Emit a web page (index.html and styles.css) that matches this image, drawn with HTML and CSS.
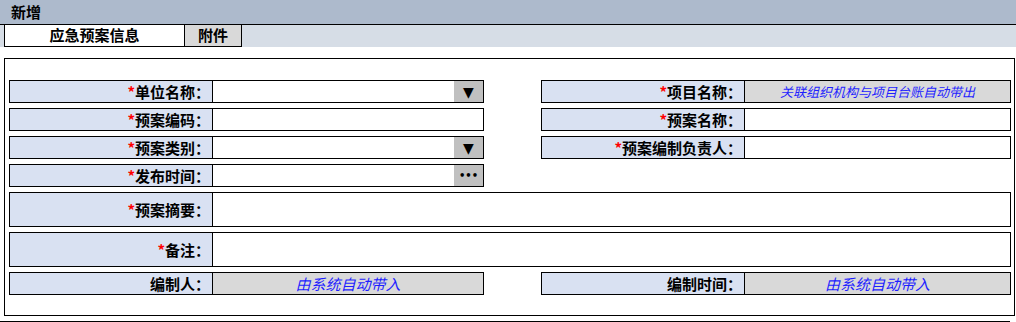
FILE: index.html
```html
<!DOCTYPE html>
<html lang="zh">
<head>
<meta charset="utf-8">
<link rel="stylesheet" href="styles.css">
</head>
<body>
<div class="page">
  <div class="title">新增</div>
  <div class="tabs">
    <div class="tab active">应急预案信息</div>
    <div class="tab">附件</div>
  </div>
  <div class="panel">
    <div class="form">
      <div class="field">
        <div class="label"><span class="req">*</span>单位名称：</div>
        <div class="input"><span class="btn">▼</span></div>
      </div>
      <div class="field">
        <div class="label"><span class="req">*</span>项目名称：</div>
        <div class="input auto small">关联组织机构与项目台账自动带出</div>
      </div>
      <div class="field">
        <div class="label"><span class="req">*</span>预案编码：</div>
        <div class="input"></div>
      </div>
      <div class="field">
        <div class="label"><span class="req">*</span>预案名称：</div>
        <div class="input"></div>
      </div>
      <div class="field">
        <div class="label"><span class="req">*</span>预案类别：</div>
        <div class="input"><span class="btn">▼</span></div>
      </div>
      <div class="field">
        <div class="label"><span class="req">*</span>预案编制负责人：</div>
        <div class="input"></div>
      </div>
      <div class="field">
        <div class="label"><span class="req">*</span>发布时间：</div>
        <div class="input"><span class="btn dots">•••</span></div>
      </div>
      <div class="field empty"></div>
      <div class="field wide tall">
        <div class="label"><span class="req">*</span>预案摘要：</div>
        <div class="input"></div>
      </div>
      <div class="field wide tall">
        <div class="label"><span class="req">*</span>备注：</div>
        <div class="input"></div>
      </div>
      <div class="field">
        <div class="label">编制人：</div>
        <div class="input auto">由系统自动带入</div>
      </div>
      <div class="field">
        <div class="label">编制时间：</div>
        <div class="input auto">由系统自动带入</div>
      </div>
    </div>
  </div>
  <div class="bottom-line"></div>
</div>
</body>
</html>
```

FILE: styles.css
```css
* { box-sizing: border-box; }
html, body { margin: 0; padding: 0; background: #fff; }
body {
  font-family: "Noto Sans CJK SC", "Microsoft YaHei", sans-serif;
  font-size: 15px;
  color: #000;
}
.page { width: 1016px; height: 322px; overflow: hidden; }
.title {
  height: 25px;
  background: #adbacc;
  border-bottom: 1px solid #000;
  font-weight: bold;
  padding-left: 11px;
  line-height: 24px;
}
.tabs {
  display: flex;
  height: 22px;
  background: #d6dde6;
}
.tab {
  height: 22px;
  line-height: 20px;
  font-weight: bold;
  text-align: center;
  border-bottom: 1px solid #000;
  border-right: 1px solid #000;
}
.tab.active {
  margin-left: 4px;
  width: 181px;
  background: #fff;
  border-left: 1px solid #000;
}
.tab:not(.active) {
  width: 57px;
  background: #d9d9d9;
}
.panel {
  margin: 11px 0 0 4px;
  width: 1011px;
  height: 258px;
  border: 1px solid #000;
  padding: 21px 0 0 4px;
}
.form {
  display: grid;
  grid-template-columns: 475px 470px;
  column-gap: 57px;
  row-gap: 5px;
}
.field {
  display: grid;
  grid-template-columns: 203px 1fr;
  height: 23px;
  border: 1px solid #000;
}
.field.empty { border: none; }
.field.wide { grid-column: 1 / 3; }
.field.tall { height: 35px; }
.label {
  background: #d9e1f2;
  border-right: 1px solid #000;
  font-weight: bold;
  padding-right: 2px;
  display: flex;
  align-items: center;
  justify-content: flex-end;
  white-space: nowrap;
}
.req { color: #ff0000; }
.input {
  display: flex;
  justify-content: flex-end;
  align-items: stretch;
  background: #fff;
}
.input.auto {
  background: #d9d9d9;
  justify-content: center;
  align-items: center;
  font-style: italic;
  color: #1f1fff;
}
.input.small { font-size: 13px; }
.btn {
  width: 29px;
  background: #c0c0c0;
  display: flex;
  align-items: center;
  justify-content: center;
  font-size: 14px;
  font-family: "DejaVu Sans", sans-serif;
}
.btn.dots { font-size: 10px; font-weight: bold; }
.bottom-line {
  margin-top: 5px;
  width: 1010px;
  height: 1px;
  background: #000;
}
```
